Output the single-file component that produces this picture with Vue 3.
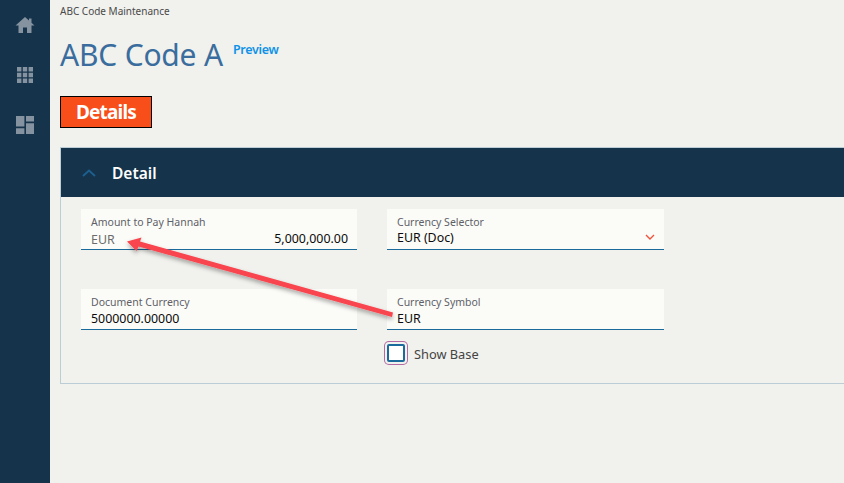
<script setup>
const rows = [
  [
    { label: 'Amount to Pay Hannah', value: '5,000,000.00', prefix: 'EUR' },
    { label: 'Currency Selector', value: 'EUR (Doc)', select: true },
  ],
  [
    { label: 'Document Currency', value: '5000000.00000' },
    { label: 'Currency Symbol', value: 'EUR' },
  ],
]
</script>

<template>
  <div class="app">
    <nav class="side">
      <svg class="ico" viewBox="0 0 20 20"><path d="M10 2 0.5 10.5H3.5V18H8V12.5H12V18H16.5V10.5H19.5L16.5 7.8V3.5H14V5.6Z" /></svg>
      <svg class="ico" viewBox="0 0 20 20"><path d="M2 2h4.4v4.4H2zM7.8 2h4.4v4.4H7.8zM13.6 2H18v4.4h-4.4zM2 7.8h4.4v4.4H2zM7.8 7.8h4.4v4.4H7.8zM13.6 7.8H18v4.4h-4.4zM2 13.6h4.4V18H2zM7.8 13.6h4.4V18H7.8zM13.6 13.6H18V18h-4.4z" /></svg>
      <svg class="ico" viewBox="0 0 20 20"><path d="M1 1h8.4v10.6H1zM11 1h8v5.6h-8zM11 8.2h8V19h-8zM1 13.2h8.4V19H1z" /></svg>
    </nav>
    <main class="main">
      <div class="crumb">ABC Code Maintenance</div>
      <div class="title-row">
        <h1 class="title">ABC Code A</h1>
        <a class="preview">Preview</a>
      </div>
      <button class="tab">Details</button>
      <section class="panel">
        <header class="panel-head">
          <svg class="chev" viewBox="0 0 14 8"><path d="M1 7 7 1.5 13 7" /></svg>
          <span>Detail</span>
        </header>
        <div class="panel-body">
          <div class="grid">
            <template v-for="(row, r) in rows" :key="r">
              <div v-for="f in row" :key="f.label" class="field">
                <div class="label">{{ f.label }}</div>
                <div class="val" :class="{ amount: f.prefix, select: f.select }">
                  <span v-if="f.prefix" class="prefix">{{ f.prefix }}</span>
                  <span>{{ f.value }}</span>
                  <svg v-if="f.select" class="drop" viewBox="0 0 10 6"><path d="M1 1 5 5 9 1" /></svg>
                </div>
              </div>
            </template>
          </div>
          <label class="check">
            <span class="box"></span>
            <span class="check-text">Show Base</span>
          </label>
        </div>
      </section>
    </main>
    <svg class="arrow" viewBox="0 0 844 483" width="844" height="483">
      <defs>
        <filter id="sh" x="-10%" y="-30%" width="120%" height="170%">
          <feDropShadow dx="0" dy="2.5" stdDeviation="2" flood-color="#000" flood-opacity="0.35" />
        </filter>
      </defs>
      <g filter="url(#sh)" fill="#f9444d">
        <path d="M393 312.5 392 317 138.5 246.5 136.5 251 127 241.5 141.5 237.5 140 241.5Z" />
      </g>
    </svg>
  </div>
</template>

<style>
html, body { margin: 0; background: #f1f1ed; }
</style>

<style scoped>
.app {
  position: relative;
  display: flex;
  width: 844px;
  height: 483px;
  overflow: hidden;
  background: #f1f1ed;
  font-family: "Noto Sans", "Open Sans", sans-serif;
}
.side {
  flex: 0 0 50px;
  background: #15334a;
  display: flex;
  flex-direction: column;
  align-items: center;
  padding-top: 15px;
  gap: 30px;
  box-sizing: border-box;
}
.ico { width: 20px; height: 20px; fill: #84939f; }
.main { flex: 1; padding-left: 10px; min-width: 0; }
.crumb { font-size: 10px; line-height: 14px; padding-top: 4px; color: #4a4a4a; }
.title-row { display: flex; align-items: flex-start; gap: 10px; margin-top: 17px; height: 44px; }
.title { margin: 0; font-size: 30px; line-height: 40px; font-weight: 400; color: #3a6d9d; letter-spacing: -0.2px; }
.preview { font-size: 12.5px; line-height: 16px; font-weight: 600; color: #0f93e8; letter-spacing: -0.3px; margin-top: 7px; }
.tab {
  display: block;
  width: 92px;
  height: 32px;
  margin: 17px 0 19px;
  padding: 0;
  box-sizing: border-box;
  border: 1px solid #000;
  background: #f74e1a;
  color: #fff;
  font: 700 19px/28px "Noto Sans", sans-serif;
  letter-spacing: -0.8px;
}
.panel { width: 840px; height: 237px; box-sizing: border-box; border: 1px solid #bccdd5; border-right: 0; }
.panel-head {
  height: 49px;
  background: #15334a;
  color: #fff;
  display: flex;
  align-items: center;
  font-size: 15.5px;
  font-weight: 600;
  padding-left: 21px;
  gap: 16px;
}
.chev { width: 14px; height: 8px; fill: none; stroke: #1d5f8f; stroke-width: 2; }
.panel-body { padding: 12px 0 0 20px; }
.grid { display: grid; grid-template-columns: 276px 277px; column-gap: 30px; row-gap: 39px; }
.field {
  height: 41px;
  box-sizing: border-box;
  background: #fbfcf8;
  border-bottom: 1.5px solid #1a6a9c;
  padding: 6px 9px 0 10px;
}
.label { font-size: 10.5px; line-height: 15px; color: #5f5f68; }
.val { position: relative; font-size: 12.4px; line-height: 17px; color: #0b0b0b; }
.val.amount { display: flex; justify-content: space-between; }
.val.select { top: -1px; }
.prefix { color: #6b6b6b; position: relative; top: 1px; }
.drop { position: absolute; right: 0; top: 5px; width: 10px; height: 6px; fill: none; stroke: #f0533b; stroke-width: 1.4; }
.check {
  display: flex;
  align-items: center;
  gap: 9px;
  margin: 13px 0 0 306px;
  font-size: 12.8px;
  line-height: 20px;
  color: #444;
}
.check-text { position: relative; top: 1px; }
.box {
  display: block;
  box-sizing: border-box;
  width: 18px;
  height: 18px;
  background: #fff;
  border: 2.5px solid #1a6a9c;
  border-radius: 2px;
  box-shadow: 0 0 0 2px #f1f1ed, 0 0 0 3px #b36aa2;
}
.arrow { position: absolute; left: 0; top: 0; pointer-events: none; }
</style>
